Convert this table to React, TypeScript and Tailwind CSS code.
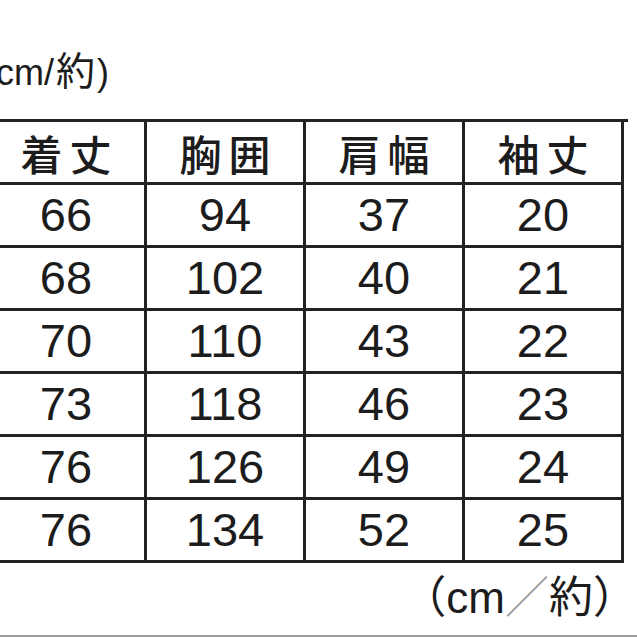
import React from 'react';

const HEADERS = ['着丈', '胸囲', '肩幅', '袖丈'];

const ROWS = [
  [66, 94, 37, 20],
  [68, 102, 40, 21],
  [70, 110, 43, 22],
  [73, 118, 46, 23],
  [76, 126, 49, 24],
  [76, 134, 52, 25],
];

const jp = { fontFamily: '"Noto Sans CJK JP", "Noto Sans", sans-serif' };
const num = { fontFamily: '"Liberation Sans", Arial, sans-serif' };

export default function App() {
  return (
    <div className="w-[637px] h-[637px] overflow-hidden bg-white flex flex-col text-[#1c1c1c]">
      {/* caption left over from the table above, cut off at the edge */}
      <div
        className="h-[88px] shrink-0 pt-[48px] ml-[-16px] text-[36px] leading-[40px] whitespace-nowrap"
        style={{ fontFamily: '"Liberation Sans", "Noto Sans CJK JP", sans-serif' }}
      >
        (cm/<span className="text-[39px] leading-[40px] px-[2px]" style={jp}>約</span>)
      </div>

      {/* size table */}
      <div className="mt-[31px] ml-[-12px] w-[640px] border-t-[3px] border-[#222]">
        <div className="grid grid-cols-[159px_159px_159px_159px]">
          {HEADERS.map((h) => (
            <div
              key={h}
              className="h-[63px] border-r-[3px] border-b-[3px] border-[#222] flex items-center justify-center text-[42px] font-medium tracking-[7px] pl-[7px]"
              style={jp}
            >
              {h}
            </div>
          ))}
          {ROWS.map((row, i) =>
            row.map((v, j) => (
              <div
                key={`${i}-${j}`}
                className="h-[63px] border-r-[3px] border-b-[3px] border-[#222] flex items-center justify-center text-[47px]"
                style={num}
              >
                {v}
              </div>
            ))
          )}
        </div>
      </div>

      {/* unit note */}
      <div className="mt-[9px] flex justify-end">
        <span className="h-[44px] text-[44px] leading-[44px] whitespace-nowrap" style={jp}>
          （<span style={num}>cm</span>
          <span className="text-[#9a9a9a] font-light">／</span>約）
        </span>
      </div>

      <div className="flex-1" />
      <div className="h-[2px] shrink-0 bg-[#9c9c9c]" />
    </div>
  );
}
